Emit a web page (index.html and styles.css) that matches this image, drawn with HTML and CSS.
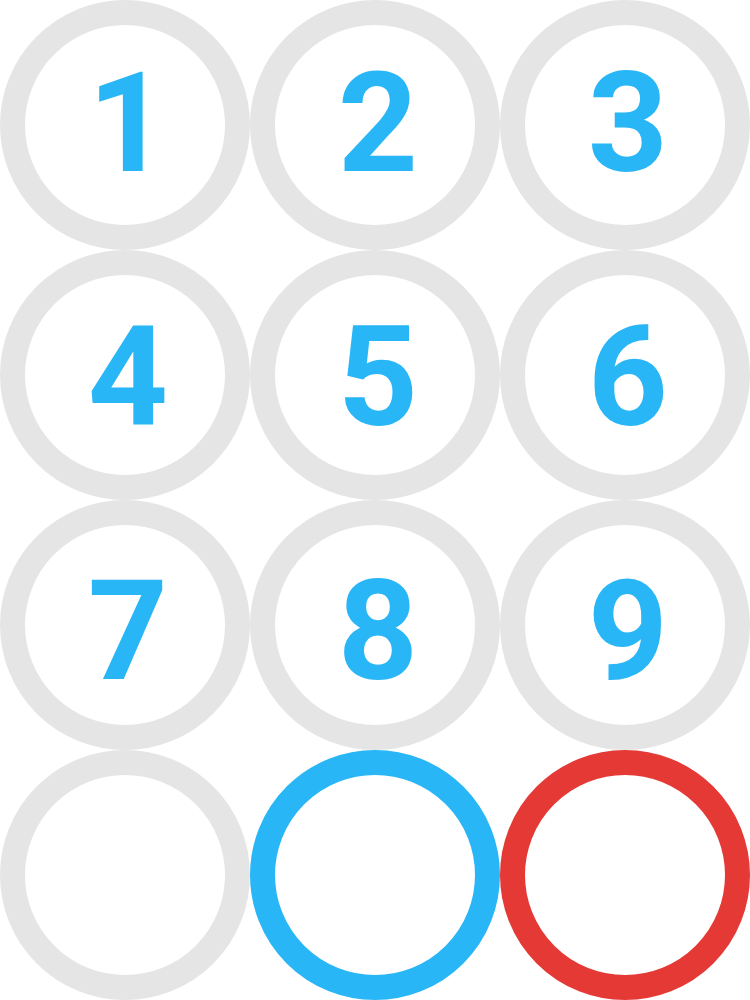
FILE: index.html
```html
<!DOCTYPE html>
<html>
<head>
<meta charset="utf-8">
<link rel="stylesheet" href="styles.css">
</head>
<body>
<div class="pad">
  <div class="key row-1"><span class="digit">1</span></div>
  <div class="key row-1"><span class="digit">2</span></div>
  <div class="key row-1"><span class="digit">3</span></div>
  <div class="key row-2"><span class="digit">4</span></div>
  <div class="key row-2"><span class="digit">5</span></div>
  <div class="key row-2"><span class="digit">6</span></div>
  <div class="key row-3"><span class="digit">7</span></div>
  <div class="key row-3"><span class="digit">8</span></div>
  <div class="key row-3"><span class="digit">9</span></div>
  <div class="key"></div>
  <div class="key key-ok"></div>
  <div class="key key-cancel"></div>
</div>
</body>
</html>
```

FILE: styles.css
```css
html, body {
  margin: 0;
  padding: 0;
  background: #ffffff;
}

.pad {
  display: grid;
  grid-template-columns: repeat(3, 250px);
  grid-auto-rows: 250px;
  width: 750px;
}

.key {
  box-sizing: border-box;
  width: 250px;
  height: 250px;
  border: 25px solid #e5e5e5;
  border-radius: 50%;
  padding-left: 6px;
  display: flex;
  align-items: center;
  justify-content: center;
  font-family: Roboto, "Liberation Sans", sans-serif;
  font-weight: 700;
  font-size: 140px;
  line-height: 1;
  color: #29b6f6;
}

.row-1 {
  padding-bottom: 4px;
}

.row-2 {
  padding-top: 4px;
}

.row-3 {
  padding-top: 12px;
}

.digit {
  display: block;
}

.key-ok {
  border-color: #29b6f6;
}

.key-cancel {
  border-color: #e53935;
}
```
